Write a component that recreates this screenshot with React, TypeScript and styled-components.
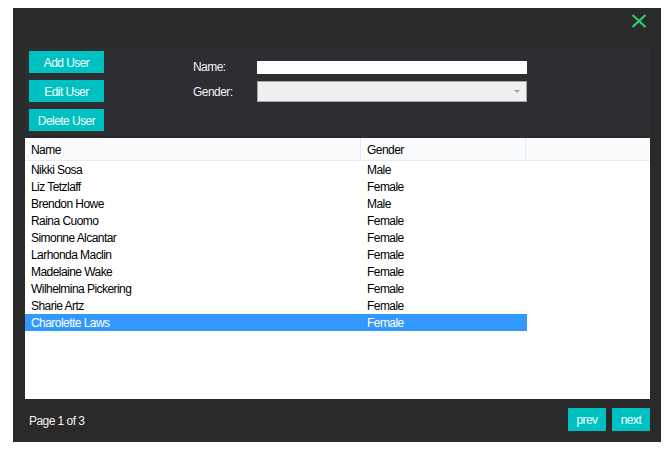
import styled, { createGlobalStyle } from 'styled-components';

const GlobalStyle = createGlobalStyle`
  html, body {
    margin: 0;
    padding: 0;
    background: #ffffff;
  }
  body {
    font-family: "Liberation Sans", Arial, sans-serif;
    font-size: 12px;
    letter-spacing: -0.55px;
  }
`;

const Window = styled.div`
  margin: 8px 0 0 13px;
  width: 648px;
  height: 434px;
  background: #2a2a2a;
  box-sizing: border-box;
  padding: 0 11px 0 12px;
  display: flex;
  flex-direction: column;
`;

const TitleBar = styled.div`
  height: 39px;
  display: flex;
  justify-content: flex-end;
  align-items: flex-start;
  padding-top: 6px;
  padding-right: 3px;
  box-sizing: border-box;
`;

const CloseButton = styled.button`
  border: 0;
  background: none;
  padding: 0;
  width: 16px;
  height: 14px;
  cursor: pointer;
  display: block;
`;

const Toolbar = styled.div`
  height: 88px;
  background: #2d2d32;
  box-sizing: border-box;
  padding: 4px 4px;
  display: flex;
`;

const ButtonColumn = styled.div`
  display: flex;
  flex-direction: column;
  gap: 7px;
`;

const ActionButton = styled.button<{ $w?: number; $h?: number }>`
  width: ${p => p.$w ?? 75}px;
  height: ${p => p.$h ?? 22}px;
  border: 0;
  background: #00c1c1;
  color: #f4ffff;
  font-family: inherit;
  font-size: 12px;
  letter-spacing: -0.55px;
  padding: 1px 0 0;
  cursor: pointer;
`;

const Form = styled.div`
  margin: 10px 0 0 89px;
  display: grid;
  grid-template-columns: 64px 270px;
  grid-template-rows: 13px 21px;
  row-gap: 7px;
  align-items: center;
`;

const Label = styled.span<{ $nudge?: number }>`
  color: #f2f2f2;
  line-height: 13px;
  padding-top: ${p => p.$nudge ?? 0}px;
`;

const TextInput = styled.div`
  height: 13px;
  background: #ffffff;
`;

const Combo = styled.div`
  height: 21px;
  box-sizing: border-box;
  background: #efefef;
  border: 1px solid #a9a9a9;
  display: flex;
  justify-content: flex-end;
  align-items: center;
  padding-right: 6px;
`;

const Arrow = styled.span`
  width: 0;
  height: 0;
  border-left: 3px solid transparent;
  border-right: 3px solid transparent;
  border-top: 3px solid #a0a0a0;
`;

const Table = styled.div`
  margin-top: 3px;
  height: 261px;
  background: #ffffff;
  display: flex;
  flex-direction: column;
`;

const HeaderRow = styled.div`
  height: 23px;
  display: grid;
  grid-template-columns: 336px 165px 1fr;
  background: #f9fbfd;
  border-bottom: 1px solid #e3ebf5;
  box-sizing: border-box;
`;

const HeaderCell = styled.div<{ $divider?: boolean }>`
  display: flex;
  align-items: center;
  padding: 1px 0 0 6px;
  color: #000;
  border-right: ${p => (p.$divider ? '1px solid #e3ebf5' : '0')};
`;

const Row = styled.div<{ $selected?: boolean }>`
  height: 17px;
  width: 502px;
  display: grid;
  grid-template-columns: 336px 166px;
  align-items: center;
  background: ${p => (p.$selected ? '#3399ff' : 'transparent')};
  color: ${p => (p.$selected ? '#ffffff' : '#000000')};
`;

const Cell = styled.div`
  padding: 1px 0 0 6px;
  white-space: nowrap;
`;

const Footer = styled.div`
  flex: 1;
  display: flex;
  align-items: center;
  justify-content: space-between;
  padding: 0 0 0 4px;
  margin-top: -2px;
`;

const PageText = styled.span`
  color: #f2f2f2;
  padding-top: 2px;
`;

const Pager = styled.div`
  display: flex;
  gap: 6px;
`;

const people = [
  ['Nikki Sosa', 'Male'],
  ['Liz Tetzlaff', 'Female'],
  ['Brendon Howe', 'Male'],
  ['Raina Cuomo', 'Female'],
  ['Simonne Alcantar', 'Female'],
  ['Larhonda Maclin', 'Female'],
  ['Madelaine Wake', 'Female'],
  ['Wilhelmina Pickering', 'Female'],
  ['Sharie Artz', 'Female'],
  ['Charolette Laws', 'Female'],
];

const App: React.FC = () => {
  return (
    <>
      <GlobalStyle />
      <Window>
        <TitleBar>
          <CloseButton aria-label="Close">
            <svg width="16" height="14" viewBox="0 0 16 14">
              <path d="M1.5 1 L14.5 13 M14.5 1 L1.5 13" stroke="#2ecc71" strokeWidth="2.2" />
            </svg>
          </CloseButton>
        </TitleBar>
        <Toolbar>
          <ButtonColumn>
            <ActionButton>Add User</ActionButton>
            <ActionButton>Edit User</ActionButton>
            <ActionButton>Delete User</ActionButton>
          </ButtonColumn>
          <Form>
            <Label>Name:</Label>
            <TextInput />
            <Label $nudge={2}>Gender:</Label>
            <Combo>
              <Arrow />
            </Combo>
          </Form>
        </Toolbar>
        <Table>
          <HeaderRow>
            <HeaderCell $divider>Name</HeaderCell>
            <HeaderCell $divider>Gender</HeaderCell>
            <HeaderCell />
          </HeaderRow>
          {people.map(([name, gender], i) => (
            <Row key={name} $selected={i === people.length - 1}>
              <Cell>{name}</Cell>
              <Cell>{gender}</Cell>
            </Row>
          ))}
        </Table>
        <Footer>
          <PageText>Page 1 of 3</PageText>
          <Pager>
            <ActionButton $w={38} $h={23}>prev</ActionButton>
            <ActionButton $w={38} $h={23}>next</ActionButton>
          </Pager>
        </Footer>
      </Window>
    </>
  );
};

export default App;
